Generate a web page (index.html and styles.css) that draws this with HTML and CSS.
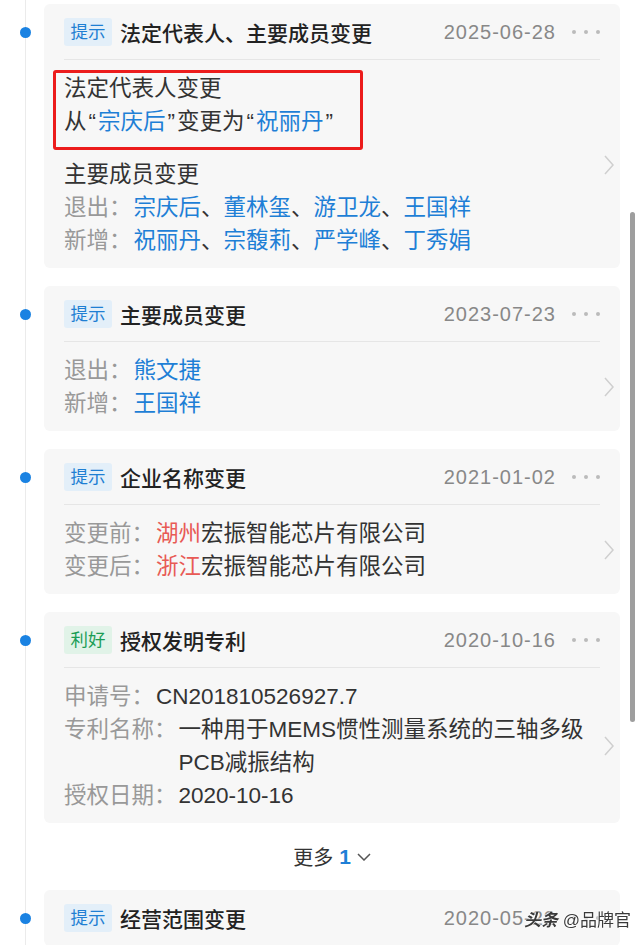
FILE: index.html
```html
<!DOCTYPE html>
<html lang="zh-CN">

<head>
  <meta charset="utf-8">
  <title>工商变更</title>

  <link rel="stylesheet" href="styles.css">

</head>

<body>
  <div class="timeline">

    <div class="event">
      <span class="dot"></span>
      <div class="card">
        <div class="card-head">
          <span class="tag">提示</span>
          <span class="title">法定代表人、主要成员变更</span>
          <span class="date">2025-06-28</span>
          <span class="more"><i></i><i></i><i></i></span>
        </div>
        <div class="card-body">
          <div class="content">
            <div class="group highlight">
              <p>法定代表人变更</p>
              <p>从<q>“</q><a>宗庆后</a><q>”</q>变更为<q>“</q><a>祝丽丹</a><q>”</q></p>
            </div>
            <div class="group">
              <p>主要成员变更</p>
              <p class="row"><span class="label">退出：</span><span class="value"><a>宗庆后</a>、<a>董林玺</a>、<a>游卫龙</a>、<a>王国祥</a></span></p>
              <p class="row"><span class="label">新增：</span><span class="value"><a>祝丽丹</a>、<a>宗馥莉</a>、<a>严学峰</a>、<a>丁秀娟</a></span></p>
            </div>
          </div>
          <svg class="chev" width="10" height="20" viewBox="0 0 10 20"><polyline points="1,1 9,10 1,19" /></svg>
        </div>
      </div>
    </div>

    <div class="event">
      <span class="dot"></span>
      <div class="card">
        <div class="card-head">
          <span class="tag">提示</span>
          <span class="title">主要成员变更</span>
          <span class="date">2023-07-23</span>
          <span class="more"><i></i><i></i><i></i></span>
        </div>
        <div class="card-body">
          <div class="content">
            <p class="row"><span class="label">退出：</span><span class="value"><a>熊文捷</a></span></p>
            <p class="row"><span class="label">新增：</span><span class="value"><a>王国祥</a></span></p>
          </div>
          <svg class="chev" width="10" height="20" viewBox="0 0 10 20"><polyline points="1,1 9,10 1,19" /></svg>
        </div>
      </div>
    </div>

    <div class="event">
      <span class="dot"></span>
      <div class="card">
        <div class="card-head">
          <span class="tag">提示</span>
          <span class="title">企业名称变更</span>
          <span class="date">2021-01-02</span>
          <span class="more"><i></i><i></i><i></i></span>
        </div>
        <div class="card-body">
          <div class="content">
            <p class="row"><span class="label">变更前：</span><span class="value"><em>湖州</em>宏振智能芯片有限公司</span></p>
            <p class="row"><span class="label">变更后：</span><span class="value"><em>浙江</em>宏振智能芯片有限公司</span></p>
          </div>
          <svg class="chev" width="10" height="20" viewBox="0 0 10 20"><polyline points="1,1 9,10 1,19" /></svg>
        </div>
      </div>
    </div>

    <div class="event">
      <span class="dot"></span>
      <div class="card">
        <div class="card-head">
          <span class="tag good">利好</span>
          <span class="title">授权发明专利</span>
          <span class="date">2020-10-16</span>
          <span class="more"><i></i><i></i><i></i></span>
        </div>
        <div class="card-body">
          <div class="content">
            <p class="row"><span class="label">申请号：</span><span class="value">CN201810526927.7</span></p>
            <p class="row"><span class="label">专利名称：</span><span class="value">一种用于MEMS惯性测量系统的三轴多级PCB减振结构</span></p>
            <p class="row"><span class="label">授权日期：</span><span class="value">2020-10-16</span></p>
          </div>
          <svg class="chev" width="10" height="20" viewBox="0 0 10 20"><polyline points="1,1 9,10 1,19" /></svg>
        </div>
      </div>
    </div>

    <div class="load-more">
      更多 <b>1</b>
      <svg width="14" height="8" viewBox="0 0 14 8"><polyline points="1,1 7,7 13,1" /></svg>
    </div>

    <div class="event">
      <span class="dot"></span>
      <div class="card">
        <div class="card-head">
          <span class="tag">提示</span>
          <span class="title">经营范围变更</span>
          <span class="date">2020-05-22</span>
          <span class="more"><i></i><i></i><i></i></span>
        </div>
      </div>
    </div>

  </div>

  <div class="scrollbar"></div>
  <div class="watermark"><span class="brand">头条</span> @品牌官</div>
</body>

</html>
```

FILE: styles.css
```css
html, body {
	margin: 0;
	overflow: hidden;
	background: #fff;
}

body {
	font-family: "Liberation Sans", "Noto Sans CJK SC", sans-serif;
	color: #333;
}

p {
	margin: 0;
}

.timeline {
	margin-left: 25px;
	border-left: 1px solid #ebebeb;
	padding: 4px 20px 0 18px;
	min-height: 100vh;
}

.event {
	position: relative;
	margin-bottom: 18px;
}

.dot {
	position: absolute;
	left: -24px;
	top: 23px;
	width: 11px;
	height: 11px;
	border-radius: 50%;
	background: #1a82e2;
}

.card {
	background: #f7f7f7;
	border-radius: 6px;
}

.card-head {
	display: flex;
	align-items: center;
	margin: 0 20px;
	padding: 14px 0 13px;
	border-bottom: 1px solid #e6e6e6;
	height: 28px;
}

.tag {
	width: 48px;
	height: 28px;
	line-height: 28px;
	text-align: center;
	font-size: 17.5px;
	color: #1f7fd3;
	background: #e3eff9;
	border-radius: 3px;
	margin-right: 8px;
}

.tag.good {
	color: #1a9d55;
	background: #e1f3e8;
}

.title {
	font-size: 21px;
	font-weight: 500;
	color: #222;
}

.date {
	margin-left: auto;
	font-size: 20px;
	letter-spacing: 1px;
	color: #888;
}

.more {
	display: flex;
	gap: 8px;
	margin-left: 16px;
}

.more i {
	width: 4px;
	height: 4px;
	border-radius: 50%;
	background: #bbb;
}

.card-body {
	display: flex;
	align-items: center;
	padding: 12px 6px 11px 20px;
}

.content {
	flex: 1;
	font-size: 22.5px;
	line-height: 33px;
}

.group + .group {
	margin-top: 20px;
}

.highlight {
	position: relative;
}

.highlight::after {
	content: "";
	position: absolute;
	left: -11px;
	top: -2px;
	width: 310px;
	height: 80px;
	box-sizing: border-box;
	border: 3px solid #ec1c1c;
	border-radius: 3px;
}

q {
	quotes: none;
	padding: 0 2px;
}

.row {
	display: flex;
}

.label {
	flex-shrink: 0;
	color: #999;
	margin-right: 2px;
}

.value {
	flex: 1;
}

a {
	color: #1e7fd6;
	text-decoration: none;
}

em {
	font-style: normal;
	color: #e85a55;
}

.chev {
	flex-shrink: 0;
	margin-left: 10px;
}

.chev polyline {
	fill: none;
	stroke: #cfcfcf;
	stroke-width: 1.5;
}

.load-more {
	height: 67px;
	margin-top: -18px;
	display: flex;
	align-items: center;
	justify-content: center;
	gap: 6px;
	font-size: 20px;
	color: #333;
}

.load-more b {
	color: #1e7fd6;
	font-size: 21px;
}

.load-more svg polyline {
	fill: none;
	stroke: #555;
	stroke-width: 1.5;
}

.scrollbar {
	position: fixed;
	left: 630px;
	top: 212px;
	width: 5px;
	height: 510px;
	border-radius: 3px;
	background: #9e9e9e;
}

.watermark {
	position: fixed;
	left: 524px;
	top: 906px;
	font-size: 17px;
	color: #3a3a3a;
	text-shadow: 0 0 2px #fff, 0 0 2px #fff;
}

.brand {
	font-style: italic;
	font-weight: 600;
}
```
